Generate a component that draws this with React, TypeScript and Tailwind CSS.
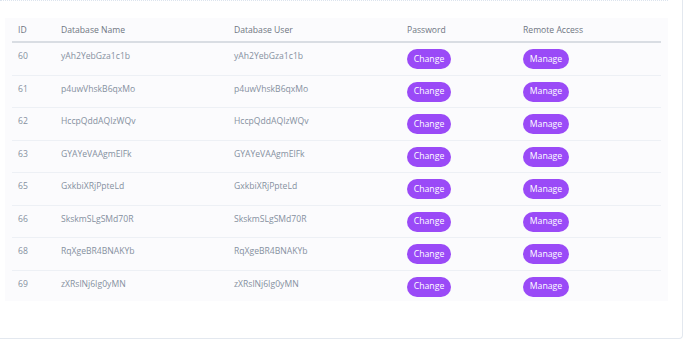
import React from "react";

const rows = [
  ["60", "yAh2YebGza1c1b"],
  ["61", "p4uwVhskB6qxMo"],
  ["62", "HccpQddAQIzWQv"],
  ["63", "GYAYeVAAgmElFk"],
  ["65", "GxkbiXRjPpteLd"],
  ["66", "SkskmSLgSMd70R"],
  ["68", "RqXgeBR4BNAKYb"],
  ["69", "zXRslNj6Ig0yMN"],
];

function Btn({ label, w }: { label: string; w: string }) {
  return (
    <div
      className={`${w} h-[20px] rounded-full bg-[#9a4af7] text-white text-[8.7px] font-medium flex items-center justify-center leading-none`}
    >
      {label}
    </div>
  );
}

export default function App() {
  return (
    <div
      className="w-[690px] h-[343px] bg-white overflow-hidden"
      style={{ fontFamily: '"Open Sans", "Liberation Sans", sans-serif' }}
    >
      <div className="w-[683px] h-[339px] border-r border-b border-[#e3e8ef] rounded-br-[4px] bg-white">
        <div className="w-[668px] border-t border-dotted border-[#dce4ee]" />
        <div className="ml-[5px] mt-[17px] w-[663px] h-[283px] bg-[#fbfbfd] px-[7px]">
          <div className="flex h-[25px] items-center pt-[2px] border-b-2 border-[#d9dde3] text-[8.6px] text-[#6f7682]">
            <div className="w-[49px] pl-[6px]">ID</div>
            <div className="w-[173px]">Database Name</div>
            <div className="w-[173px]">Database User</div>
            <div className="w-[116px]">Password</div>
            <div className="flex-1">Remote Access</div>
          </div>
          {rows.map(([id, name], i) => (
            <div
              key={id}
              className={`flex h-[32.5px] text-[8.6px] text-[#8590a0] ${
                i < rows.length - 1 ? "border-b border-[#edf0f5]" : ""
              }`}
            >
              <div className="w-[49px] pl-[6px] pt-[7px] leading-[12px]">{id}</div>
              <div className="w-[173px] pt-[7px] leading-[12px]">{name}</div>
              <div className="w-[173px] pt-[7px] leading-[12px]">{name}</div>
              <div className="w-[116px] pt-[6px]">
                <Btn label="Change" w="w-[44px]" />
              </div>
              <div className="flex-1 pt-[6px]">
                <Btn label="Manage" w="w-[46px]" />
              </div>
            </div>
          ))}
        </div>
      </div>
    </div>
  );
}
